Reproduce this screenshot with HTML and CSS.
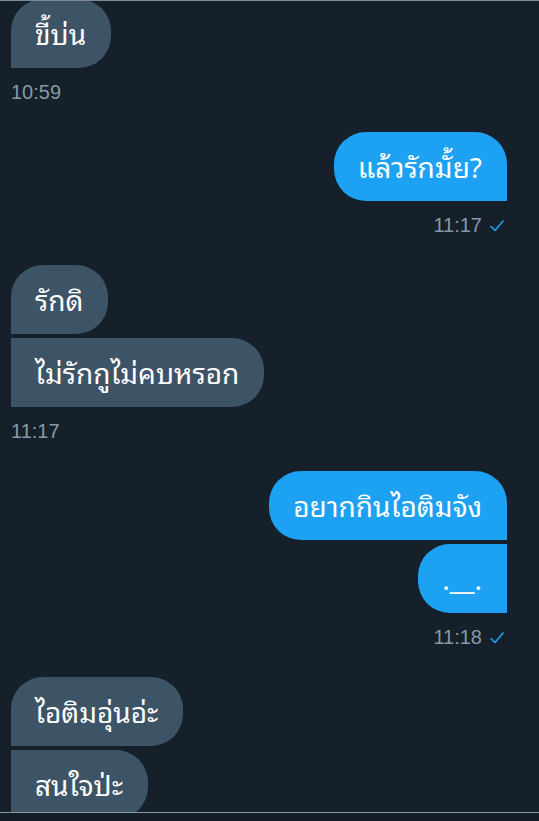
FILE: index.html
```html
<!DOCTYPE html>
<html lang="th">
<head>
<meta charset="utf-8">
<title>DM</title>
<link rel="stylesheet" href="styles.css">
</head>
<body>
<div class="screen">
  <div class="top-rule"></div>
  <div class="viewport">
    <div class="thread">
      <div class="group in">
        <div class="bubble recv single-last">ขี้บ่น</div>
        <div class="meta"><span class="time">10:59</span></div>
      </div>
      <div class="group out">
        <div class="bubble sent single-last">แล้วรักมั้ย?</div>
        <div class="meta"><span class="time">11:17</span><svg class="check" width="14" height="12" viewBox="0 0 14 12"><polyline points="1,6.5 5,10.5 13,1" fill="none" stroke="#1da1f2" stroke-width="1.6" stroke-linecap="round" stroke-linejoin="round"/></svg></div>
      </div>
      <div class="group in">
        <div class="bubble recv first">รักดิ</div>
        <div class="bubble recv last">ไม่รักกูไม่คบหรอก</div>
        <div class="meta"><span class="time">11:17</span></div>
      </div>
      <div class="group out">
        <div class="bubble sent first">อยากกินไอติมจัง</div>
        <div class="bubble sent last">.__.</div>
        <div class="meta"><span class="time">11:18</span><svg class="check" width="14" height="12" viewBox="0 0 14 12"><polyline points="1,6.5 5,10.5 13,1" fill="none" stroke="#1da1f2" stroke-width="1.6" stroke-linecap="round" stroke-linejoin="round"/></svg></div>
      </div>
      <div class="group in">
        <div class="bubble recv first">ไอติมอุ่นอ่ะ</div>
        <div class="bubble recv last">สนใจป่ะ</div>
      </div>
    </div>
  </div>
  <div class="composer"></div>
</div>
</body>
</html>
```

FILE: styles.css
```css
html, body {
  margin: 0;
  padding: 0;
  background: #15202b;
}

.screen {
  width: 539px;
  height: 821px;
  overflow: hidden;
  display: flex;
  flex-direction: column;
  background: #15202b;
}

.top-rule {
  height: 1px;
  background: #7d8b98;
  flex: none;
}

.viewport {
  height: 811px;
  flex: none;
  overflow: hidden;
  padding: 0 32px 0 11px;
}

.thread {
  margin-top: -2px;
  display: flex;
  flex-direction: column;
}

.group {
  display: flex;
  flex-direction: column;
  gap: 4px;
  margin-bottom: 29px;
}

.group.in { align-items: flex-start; }
.group.out { align-items: flex-end; }

.bubble {
  box-sizing: border-box;
  height: 69px;
  display: flex;
  align-items: center;
  padding: 0 25px 2px 24px;
  font-family: "Noto Sans Thai Looped", "Loma", "Garuda", "Kinnari", "Norasi", "Noto Sans Thai", "Noto Sans", sans-serif;
  font-size: 28px;
  line-height: 34px;
  color: #ffffff;
  white-space: nowrap;
}

.bubble.recv {
  background: #3d5466;
  border-radius: 32px;
}
.bubble.recv.single-last,
.bubble.recv.first { border-bottom-left-radius: 0; }
.bubble.recv.last { border-top-left-radius: 0; border-bottom-left-radius: 0; }

.bubble.sent {
  background: #1da1f2;
  border-radius: 32px;
}
.bubble.sent.single-last,
.bubble.sent.first { border-bottom-right-radius: 0; }
.bubble.sent.last { border-top-right-radius: 0; border-bottom-right-radius: 0; }

.meta {
  margin-top: 9px;
  display: flex;
  align-items: center;
  gap: 8px;
  height: 22px;
  padding-right: 3px;
}

.time {
  font-family: "Liberation Sans", Arial, sans-serif;
  font-size: 20px;
  line-height: 22px;
  color: #8899a6;
}

.check { display: block; margin-top: 1px; }

.composer {
  flex: 1;
  border-top: 1px solid #8899a6;
  background: #141d26;
}
```
